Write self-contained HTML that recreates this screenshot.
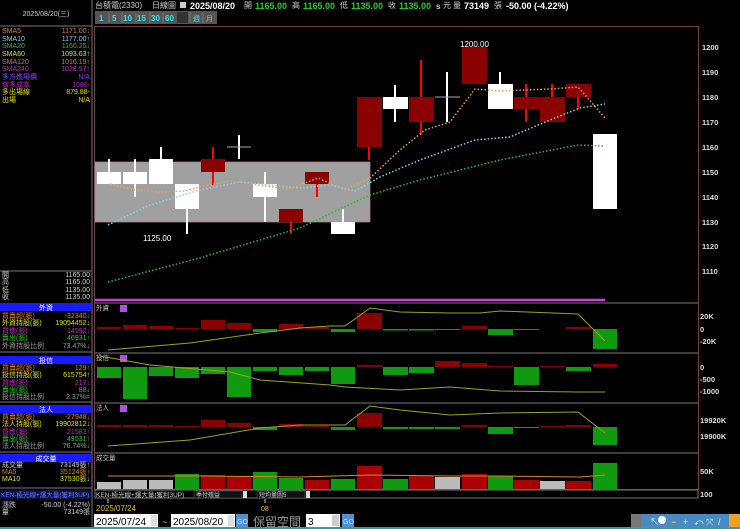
<!DOCTYPE html><html><head><meta charset="utf-8"><style>
body{margin:0;background:#000;width:740px;height:529px;overflow:hidden;font-family:"Liberation Sans","Noto Sans CJK TC",sans-serif}
svg{display:block}
</style></head><body>
<svg width="740" height="529" xmlns="http://www.w3.org/2000/svg" font-family="Liberation Sans, Noto Sans CJK TC, sans-serif">
<rect width="740" height="529" fill="#000"/>
<line x1="92" y1="0" x2="92" y2="529" stroke="#777"/>
<line x1="0" y1="26" x2="92" y2="26" stroke="#777"/>
<text x="46" y="16" fill="#ccc" font-size="7" text-anchor="middle">2025/08/20(三)</text>
<g font-size="7">
<text x="2" y="33" fill="#e08020">SMA5</text><text x="90" y="33" fill="#e08020" text-anchor="end">1171.00↓</text>
<text x="2" y="41" fill="#7ad0f0">SMA10</text><text x="90" y="41" fill="#7ad0f0" text-anchor="end">1177.00↑</text>
<text x="2" y="48" fill="#20c020">SMA20</text><text x="90" y="48" fill="#20c020" text-anchor="end">1160.25↓</text>
<text x="2" y="56" fill="#e0e000">SMA60</text><text x="90" y="56" fill="#e0e000" text-anchor="end">1093.63↑</text>
<text x="2" y="64" fill="#c08060">SMA120</text><text x="90" y="64" fill="#c08060" text-anchor="end">1016.19↑</text>
<text x="2" y="71" fill="#d020d0">SMA240</text><text x="90" y="71" fill="#d020d0" text-anchor="end">1028.57↑</text>
<text x="2" y="79" fill="#8040ff">多方進場價</text><text x="90" y="79" fill="#8040ff" text-anchor="end">N/A</text>
<text x="2" y="87" fill="#c020c0">做多成本</text><text x="90" y="87" fill="#c020c0" text-anchor="end">1080-</text>
<text x="2" y="94" fill="#e0e000">多出場線</text><text x="90" y="94" fill="#e0e000" text-anchor="end">879.88-</text>
<text x="2" y="102" fill="#e0e000">出場</text><text x="90" y="102" fill="#e0e000" text-anchor="end">N/A</text>
</g>
<line x1="0" y1="271" x2="92" y2="271" stroke="#777"/>
<g font-size="7" fill="#ccc">
<text x="2" y="277">開</text><text x="90" y="277" text-anchor="end">1165.00</text>
<text x="2" y="284">高</text><text x="90" y="284" text-anchor="end">1165.00</text>
<text x="2" y="292">低</text><text x="90" y="292" text-anchor="end">1135.00</text>
<text x="2" y="299">收</text><text x="90" y="299" text-anchor="end">1135.00</text>
</g>
<g font-size="7">
<rect x="0" y="303" width="91" height="8" fill="#1a1aff"/><text x="46" y="310" fill="#fff" text-anchor="middle">外資</text>
<text x="2" y="318" fill="#e08020">買賣超(張)</text><text x="90" y="318" fill="#e08020" text-anchor="end">-32340↓</text>
<text x="2" y="325" fill="#e0e000">外資持股(張)</text><text x="90" y="325" fill="#e0e000" text-anchor="end">19054452↓</text>
<text x="2" y="333" fill="#d020d0">買進(張)</text><text x="90" y="333" fill="#d020d0" text-anchor="end">14592↓</text>
<text x="2" y="340" fill="#20d020">賣出(張)</text><text x="90" y="340" fill="#20d020" text-anchor="end">46931↑</text>
<text x="2" y="348" fill="#999">外資持股比例</text><text x="90" y="348" fill="#999" text-anchor="end">73.47%↓</text>
<rect x="0" y="356" width="91" height="8" fill="#1a1aff"/><text x="46" y="363" fill="#fff" text-anchor="middle">投信</text>
<text x="2" y="370" fill="#e08020">買賣超(張)</text><text x="90" y="370" fill="#e08020" text-anchor="end">129↑</text>
<text x="2" y="377" fill="#e0e000">投信持股(張)</text><text x="90" y="377" fill="#e0e000" text-anchor="end">615754↑</text>
<text x="2" y="385" fill="#d020d0">買進(張)</text><text x="90" y="385" fill="#d020d0" text-anchor="end">217↓</text>
<text x="2" y="392" fill="#20d020">賣出(張)</text><text x="90" y="392" fill="#20d020" text-anchor="end">88↓</text>
<text x="2" y="399" fill="#999">投信持股比例</text><text x="90" y="399" fill="#999" text-anchor="end">2.37%=</text>
<rect x="0" y="405" width="91" height="8" fill="#1a1aff"/><text x="46" y="412" fill="#fff" text-anchor="middle">法人</text>
<text x="2" y="419" fill="#e08020">買賣超(張)</text><text x="90" y="419" fill="#e08020" text-anchor="end">-27948↓</text>
<text x="2" y="426" fill="#e0e000">法人持股(張)</text><text x="90" y="426" fill="#e0e000" text-anchor="end">19902812↓</text>
<text x="2" y="434" fill="#d020d0">買進(張)</text><text x="90" y="434" fill="#d020d0" text-anchor="end">21583↑</text>
<text x="2" y="441" fill="#20d020">賣出(張)</text><text x="90" y="441" fill="#20d020" text-anchor="end">49531↑</text>
<text x="2" y="448" fill="#999">法人持股比例</text><text x="90" y="448" fill="#999" text-anchor="end">76.74%↓</text>
<rect x="0" y="454" width="91" height="8" fill="#1a1aff"/><text x="46" y="461" fill="#fff" text-anchor="middle">成交量</text>
<text x="2" y="467" fill="#ccc">成交量</text><text x="90" y="467" fill="#ccc" text-anchor="end">73149張↑</text>
<text x="2" y="474" fill="#e08020">MA5</text><text x="90" y="474" fill="#e08020" text-anchor="end">35124張↑</text>
<text x="2" y="481" fill="#e0e000">MA10</text><text x="90" y="481" fill="#e0e000" text-anchor="end">37530張↓</text>
<rect x="0" y="490" width="91" height="9" fill="#101040"/><text x="1" y="497" fill="#6080ff" font-size="6.5">KEN-極光線+爆大量(獲利3UP)</text>
<text x="2" y="507" fill="#ccc">漲跌</text><text x="90" y="507" fill="#ccc" text-anchor="end">-50.00 (-4.22%)</text>
<text x="2" y="514" fill="#ccc">量</text><text x="90" y="514" fill="#ccc" text-anchor="end">73149張</text>
</g>
<line x1="0" y1="352" x2="92" y2="352" stroke="#777"/><line x1="0" y1="402" x2="92" y2="402" stroke="#777"/><line x1="0" y1="452" x2="92" y2="452" stroke="#777"/><line x1="0" y1="488" x2="92" y2="488" stroke="#777"/>

<g font-size="8">
<text x="95" y="8" fill="#ccc">台積電(2330)</text><text x="152" y="8" fill="#ccc">日線圖</text>
<rect x="180" y="2" width="6" height="6" fill="#ccc"/>
<text x="190" y="9" fill="#fff" font-weight="bold" font-size="9">2025/08/20</text>
<text x="244" y="8" fill="#ccc">開</text><text x="255" y="9" fill="#20d020" font-weight="bold" font-size="9">1165.00</text>
<text x="292" y="8" fill="#ccc">高</text><text x="303" y="9" fill="#20d020" font-weight="bold" font-size="9">1165.00</text>
<text x="340" y="8" fill="#ccc">低</text><text x="351" y="9" fill="#20d020" font-weight="bold" font-size="9">1135.00</text>
<text x="388" y="8" fill="#ccc">收</text><text x="399" y="9" fill="#20d020" font-weight="bold" font-size="9">1135.00</text>
<text x="436" y="9" fill="#ccc" font-weight="bold">s</text><text x="443" y="8" fill="#ccc">元</text>
<text x="453" y="8" fill="#ccc">量</text><text x="464" y="9" fill="#fff" font-weight="bold" font-size="9">73149</text><text x="494" y="8" fill="#ccc">張</text>
<text x="506" y="9" fill="#fff" font-weight="bold" font-size="9">-50.00 (-4.22%)</text>
</g>
<rect x="95" y="11" width="122" height="13" fill="#555"/>
<g font-size="8" fill="#3de0e0" font-weight="bold">
<text x="99" y="21">1</text><text x="112" y="21">5</text><text x="123" y="21">10</text><text x="137" y="21">15</text><text x="151" y="21">30</text><text x="165" y="21">60</text></g>
<rect x="177" y="12" width="11" height="11" fill="#333"/><text x="193" y="21" fill="#3de0e0" font-size="7">週</text><text x="206" y="21" fill="#3de0e0" font-size="7">月</text>
<g stroke="#777"><line x1="109" y1="12" x2="109" y2="23"/><line x1="122" y1="12" x2="122" y2="23"/><line x1="136" y1="12" x2="136" y2="23"/><line x1="150" y1="12" x2="150" y2="23"/><line x1="163" y1="12" x2="163" y2="23"/><line x1="190" y1="12" x2="190" y2="23"/><line x1="203" y1="12" x2="203" y2="23"/></g>

<rect x="94.5" y="26.5" width="604" height="463" fill="none" stroke="#7a3a4a"/>
<g stroke="#777"><line x1="95" y1="303" x2="698" y2="303"/><line x1="95" y1="353" x2="698" y2="353"/><line x1="95" y1="403" x2="698" y2="403"/><line x1="95" y1="453" x2="698" y2="453"/>
<rect x="95" y="490" width="603" height="8" fill="none"/></g>
<g font-size="7.5" fill="#ddd" font-weight="bold">
<text x="702" y="50">1200</text><text x="702" y="75">1190</text><text x="702" y="100">1180</text><text x="702" y="125">1170</text><text x="702" y="150">1160</text><text x="702" y="175">1150</text><text x="702" y="200">1140</text><text x="702" y="225">1130</text><text x="702" y="249">1120</text><text x="702" y="274">1110</text>
<text x="700" y="319">20K</text><text x="700" y="332">0</text><text x="700" y="344">-20K</text>
<text x="700" y="370">0</text><text x="700" y="382">-500</text><text x="700" y="394">-1000</text>
<text x="700" y="423">19920K</text><text x="700" y="439">19900K</text>
<text x="700" y="474">50K</text><text x="700" y="497">100</text></g>

<rect x="95" y="162" width="275" height="60" fill="#a0a0a0" stroke="#c08090" stroke-width="0.7"/>
<g>
<line x1="109" y1="159" x2="109" y2="184" stroke="#fff" stroke-width="2"/><rect x="97" y="172" width="24" height="12" fill="#fff"/>
<line x1="135" y1="159" x2="135" y2="197" stroke="#fff" stroke-width="2"/><rect x="123" y="172" width="24" height="12" fill="#fff"/>
<line x1="161" y1="147" x2="161" y2="184" stroke="#fff" stroke-width="2"/><rect x="149" y="159" width="24" height="25" fill="#fff"/>
<line x1="187" y1="184" x2="187" y2="234" stroke="#fff" stroke-width="2"/><rect x="175" y="184" width="24" height="25" fill="#fff"/>
<line x1="213" y1="147" x2="213" y2="185" stroke="#f00" stroke-width="2"/><rect x="201" y="159" width="24" height="13" fill="#8b0000"/>
<line x1="239" y1="135" x2="239" y2="159" stroke="#fff" stroke-width="2"/><line x1="227" y1="147" x2="251" y2="147" stroke="#aaa"/>
<line x1="265" y1="172" x2="265" y2="222" stroke="#fff" stroke-width="2"/><rect x="253" y="184" width="24" height="13" fill="#fff"/>
<line x1="291" y1="222" x2="291" y2="234" stroke="#f00" stroke-width="2"/><rect x="279" y="209" width="24" height="13" fill="#8b0000"/>
<line x1="317" y1="184" x2="317" y2="197" stroke="#f00" stroke-width="2"/><rect x="305" y="172" width="24" height="12" fill="#8b0000"/>
<line x1="343" y1="209" x2="343" y2="222" stroke="#fff" stroke-width="2"/><rect x="331" y="222" width="24" height="12" fill="#fff"/>
<line x1="369" y1="147" x2="369" y2="160" stroke="#f00" stroke-width="2"/><rect x="357" y="97" width="25" height="50" fill="#8b0000"/>
<line x1="395" y1="85" x2="395" y2="122" stroke="#fff" stroke-width="2"/><rect x="383" y="97" width="25" height="12" fill="#fff"/>
<line x1="421" y1="60" x2="421" y2="135" stroke="#f00" stroke-width="2"/><rect x="409" y="97" width="25" height="25" fill="#8b0000"/>
<line x1="447" y1="72" x2="447" y2="122" stroke="#fff" stroke-width="2"/><line x1="435" y1="97" x2="460" y2="97" stroke="#aaa"/>
<rect x="462" y="47" width="25" height="37" fill="#8b0000"/>
<line x1="500" y1="72" x2="500" y2="85" stroke="#fff" stroke-width="2"/><rect x="488" y="84" width="25" height="25" fill="#fff"/>
<line x1="526" y1="84" x2="526" y2="122" stroke="#f00" stroke-width="2"/><rect x="514" y="97" width="25" height="12" fill="#8b0000"/>
<line x1="552" y1="84" x2="552" y2="97" stroke="#f00" stroke-width="2"/><rect x="540" y="97" width="25" height="25" fill="#8b0000"/>
<line x1="578" y1="97" x2="578" y2="109" stroke="#f00" stroke-width="2"/><rect x="566" y="84" width="25" height="13" fill="#8b0000"/>
<rect x="593" y="134" width="24" height="75" fill="#fff"/>
</g>
<text x="460" y="47" fill="#fff" font-size="8">1200.00</text>
<text x="143" y="241" fill="#fff" font-size="8">1125.00</text>
<polyline fill="none" stroke="#f0a040" stroke-width="1.5" stroke-dasharray="1.5,2" points="110,184 135,190 160,192 185,191 200,187 230,181 265,186 290,189 318,178 345,190 370,178 400,150 425,130 450,122 475,89 500,91 525,90 550,89 578,87 605,118"/>
<polyline fill="none" stroke="#80d0f0" stroke-width="1.5" stroke-dasharray="1.5,2" points="108,225 150,205 200,190 240,182 280,186 300,188 330,185 355,191 380,177 420,160 475,140 510,137 550,120 580,108 605,104"/>
<polyline fill="none" stroke="#20c030" stroke-width="1.5" stroke-dasharray="1.5,2" points="108,282 200,258 300,228 370,195 420,180 500,160 578,145 605,146"/>
<line x1="95" y1="300" x2="605" y2="300" stroke="#d040d0" stroke-width="2.5"/>
<g font-size="6.5" fill="#ccc"><text x="96" y="310">外資</text><text x="96" y="360">投信</text><text x="96" y="410">法人</text><text x="96" y="460">成交量</text></g>
<g fill="#b050e0"><rect x="120" y="305" width="7" height="7"/><rect x="120" y="355" width="7" height="7"/><rect x="120" y="405" width="7" height="7"/></g>
<g fill="#8b0000">
<rect x="97" y="327" width="24" height="2"/><rect x="123" y="325" width="24" height="4"/><rect x="149" y="326" width="24" height="3"/><rect x="175" y="328" width="24" height="1"/><rect x="201" y="320" width="24" height="9"/><rect x="227" y="323" width="24" height="6"/><rect x="279" y="324" width="24" height="5"/><rect x="305" y="327" width="24" height="2"/><rect x="357" y="313" width="25" height="16"/><rect x="462" y="326" width="25" height="3"/><rect x="566" y="327" width="25" height="2"/></g>
<g fill="#109a10"><rect x="253" y="329" width="24" height="3"/><rect x="331" y="329" width="24" height="3"/><rect x="383" y="329" width="25" height="1.5"/><rect x="409" y="329" width="25" height="1.5"/><rect x="435" y="329" width="25" height="1"/><rect x="488" y="329" width="25" height="6"/><rect x="514" y="329" width="25" height="1"/><rect x="593" y="329" width="24" height="20"/></g>
<polyline fill="none" stroke="#a0a020" points="108,350 190,343 260,333 300,328 330,326 345,326 370,308 400,312 450,313 480,313 500,311 578,314 605,341"/>
<g fill="#109a10"><rect x="97" y="367" width="24" height="11"/><rect x="123" y="367" width="24" height="32"/><rect x="149" y="367" width="24" height="9"/><rect x="175" y="367" width="24" height="11"/><rect x="201" y="367" width="24" height="7"/><rect x="227" y="367" width="24" height="30"/><rect x="253" y="367" width="24" height="4"/><rect x="279" y="367" width="24" height="8"/><rect x="305" y="367" width="24" height="4"/><rect x="331" y="367" width="24" height="17"/><rect x="383" y="367" width="25" height="8"/><rect x="409" y="367" width="25" height="6"/><rect x="514" y="367" width="25" height="18"/><rect x="566" y="367" width="25" height="4"/></g>
<g fill="#8b0000"><rect x="357" y="365" width="25" height="2"/><rect x="435" y="361" width="25" height="6"/><rect x="462" y="363" width="25" height="4"/><rect x="488" y="366" width="25" height="1"/><rect x="540" y="366" width="25" height="1"/><rect x="593" y="364" width="24" height="3"/></g>
<polyline fill="none" stroke="#a0a020" points="100,356 150,365 230,372 260,380 330,385 345,387 400,390 450,387 500,391 578,392 605,392"/>
<g fill="#8b0000"><rect x="97" y="425" width="24" height="2"/><rect x="123" y="425" width="24" height="2"/><rect x="149" y="425" width="24" height="2"/><rect x="175" y="426" width="24" height="1"/><rect x="201" y="420" width="24" height="7"/><rect x="227" y="423" width="24" height="4"/><rect x="279" y="424" width="24" height="3"/><rect x="305" y="426" width="24" height="1"/><rect x="357" y="413" width="25" height="14"/><rect x="462" y="425" width="25" height="2"/><rect x="540" y="426" width="25" height="1"/><rect x="566" y="425" width="25" height="2"/></g>
<g fill="#109a10"><rect x="253" y="427" width="24" height="3"/><rect x="331" y="427" width="24" height="3"/><rect x="383" y="427" width="25" height="2"/><rect x="409" y="427" width="25" height="2"/><rect x="435" y="427" width="25" height="2"/><rect x="488" y="427" width="25" height="7"/><rect x="514" y="427" width="25" height="1"/><rect x="593" y="427" width="24" height="18"/></g>
<polyline fill="none" stroke="#a0a020" points="108,446 190,440 260,428 300,425 345,425 370,406 400,410 450,415 500,413 578,412 605,433"/>
<g><rect x="97" y="482" width="24" height="7" fill="#bbb"/><rect x="123" y="480" width="24" height="9" fill="#bbb"/><rect x="149" y="480" width="24" height="9" fill="#bbb"/><rect x="175" y="474" width="24" height="15" fill="#109a10"/><rect x="201" y="475" width="24" height="14" fill="#a00"/><rect x="227" y="476" width="24" height="13" fill="#a00"/><rect x="253" y="472" width="24" height="17" fill="#109a10"/><rect x="279" y="478" width="24" height="11" fill="#109a10"/><rect x="305" y="480" width="24" height="9" fill="#a00"/><rect x="331" y="479" width="24" height="10" fill="#109a10"/><rect x="357" y="466" width="25" height="23" fill="#a00"/><rect x="383" y="479" width="25" height="10" fill="#109a10"/><rect x="409" y="476" width="25" height="13" fill="#a00"/><rect x="435" y="477" width="25" height="12" fill="#bbb"/><rect x="462" y="474" width="25" height="15" fill="#a00"/><rect x="488" y="476" width="25" height="13" fill="#109a10"/><rect x="514" y="480" width="25" height="9" fill="#a00"/><rect x="540" y="481" width="25" height="8" fill="#bbb"/><rect x="566" y="481" width="25" height="8" fill="#a00"/><rect x="593" y="463" width="24" height="26" fill="#109a10"/></g>
<polyline fill="none" stroke="#e08020" points="108,476 200,476 300,477 370,475 450,476 500,476 580,477 605,475"/>
<text x="96" y="497" fill="#ccc" font-size="6.5">KEN-極光線+爆大量(獲利3UP)</text>
<rect x="194" y="491" width="48" height="7" fill="#111" stroke="#666" stroke-width="0.5"/><text x="196" y="497" fill="#ccc" font-size="6">季付殖益</text><rect x="243" y="491" width="4" height="7" fill="#ddd"/>
<rect x="257" y="491" width="48" height="7" fill="#111" stroke="#666" stroke-width="0.5"/><text x="259" y="497" fill="#ccc" font-size="6">短均量圖5</text><rect x="306" y="491" width="4" height="7" fill="#ddd"/>
<line x1="108" y1="499" x2="108" y2="503" stroke="#ccc"/><line x1="265" y1="499" x2="265" y2="503" stroke="#ccc"/>
<text x="96" y="511" fill="#e0c020" font-size="8">2025/07/24</text><text x="261" y="511" fill="#e0c020" font-size="7">08</text>
<rect x="94" y="514" width="64" height="13" fill="#fff"/><text x="96" y="525" fill="#000" font-size="10">2025/07/24</text><rect x="151" y="515" width="6" height="11" fill="#ddd"/>
<text x="162" y="525" fill="#ccc" font-size="9">~</text>
<rect x="171" y="514" width="64" height="13" fill="#fff"/><text x="173" y="525" fill="#000" font-size="10">2025/08/20</text><rect x="228" y="515" width="6" height="11" fill="#ddd"/>
<rect x="236" y="514" width="12" height="13" fill="#5090d0"/><text x="237" y="524" fill="#cde" font-size="7">GO</text>
<text x="253" y="526" fill="#999" font-size="12">保留空間</text>
<rect x="306" y="514" width="34" height="13" fill="#fff"/><text x="308" y="525" fill="#000" font-size="10">3</text><rect x="332" y="515" width="7" height="11" fill="#ccc"/>
<rect x="342" y="514" width="12" height="13" fill="#5090d0"/><text x="343" y="524" fill="#cde" font-size="7">GO</text>
<rect x="631" y="514" width="109" height="13" fill="#4a8ac0"/><rect x="631" y="514" width="10" height="13" fill="#777"/>
<g fill="#cfe" font-size="9"><text x="650" y="525">↖</text><circle cx="662" cy="520" r="4" fill="#fff"/><text x="671" y="525" fill="#ff0">−</text><text x="683" y="525" fill="#ff0">+</text><text x="694" y="525">⤺</text><text x="706" y="525">⤧</text><text x="718" y="525">/</text></g>
<rect x="729" y="514" width="11" height="13" fill="#f0a020"/>
<rect x="0" y="527" width="740" height="2" fill="#30a0a0"/>
</svg>
</body></html>
